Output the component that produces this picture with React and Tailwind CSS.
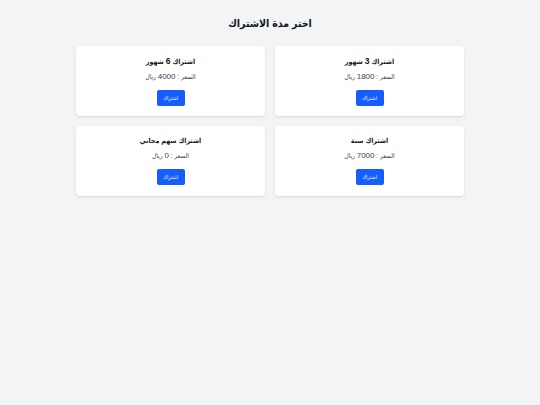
import React from 'react'

const plans = [
  { pre: 'اشتراك ', num: '3', post: ' شهور', price: '1800' },
  { pre: 'اشتراك ', num: '6', post: ' شهور', price: '4000' },
  { pre: 'اشتراك سنة', num: '', post: '', price: '7000' },
  { pre: 'اشتراك سهم مجاني', num: '', post: '', price: '0' },
]

export default function App() {
  return (
    <div dir="rtl" className="min-h-screen bg-gray-100 font-['Liberation_Sans','DejaVu_Sans_Condensed',sans-serif] text-gray-900">
      <div className="mx-auto w-[388px] pt-[15px]">
        <h1 className="text-center text-[10.5px] font-bold leading-[16px] mb-[15px]">اختر مدة الاشتراك</h1>
        <div className="grid grid-cols-2 gap-[10px]">
          {plans.map((p) => (
            <div key={p.pre + p.num} className="flex h-[70px] flex-col items-center rounded-[4px] bg-white pt-[9px] shadow-sm">
              <h2 className="text-[7px] font-bold leading-[12px]">
                {p.pre}
                {p.num && <span className="text-[8.5px]">{p.num}</span>}
                {p.post}
              </h2>
              <p className="mt-[3px] text-[6.5px] leading-[11px] text-gray-700">
                السعر : <span className="text-[8px]">{p.price}</span> ريال
              </p>
              <button className="mt-[8px] h-[16px] w-[28px] rounded-[2px] bg-blue-600 text-[5.5px] text-white/90">اشتراك</button>
            </div>
          ))}
        </div>
      </div>
    </div>
  )
}
